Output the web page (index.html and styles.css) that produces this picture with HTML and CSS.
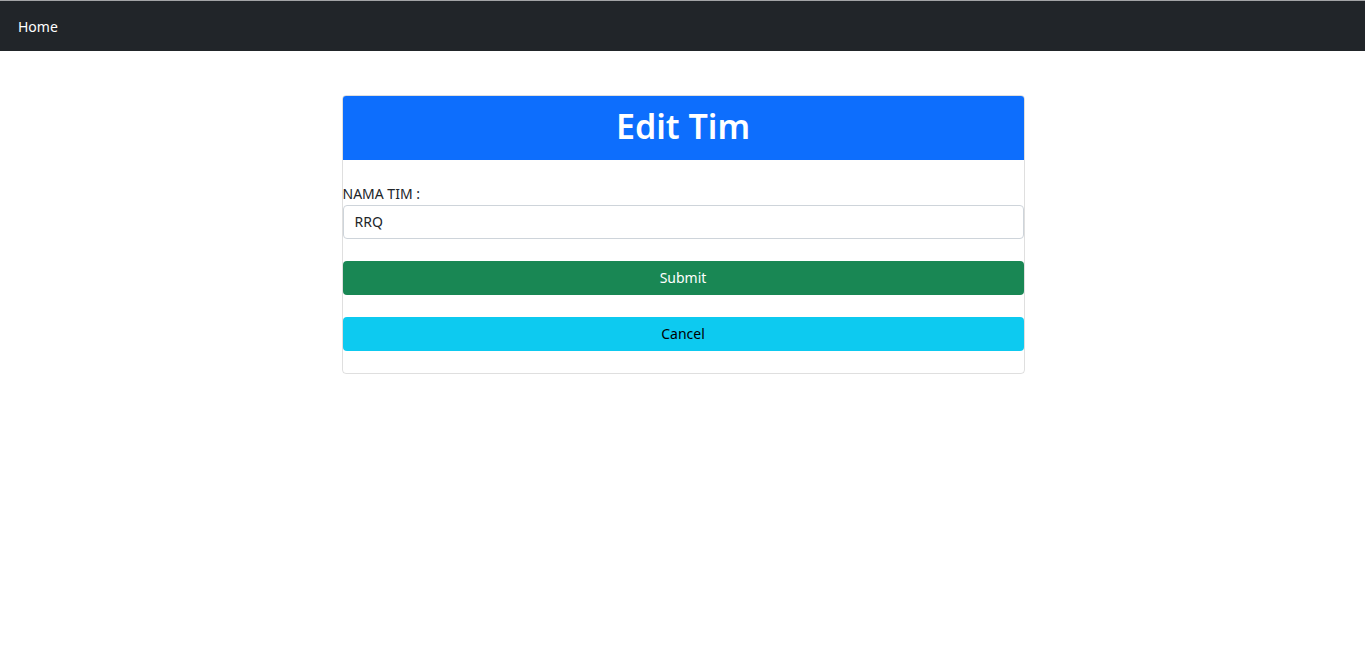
FILE: index.html
```html
<!DOCTYPE html>
<html lang="id">
<head>
<meta charset="utf-8">
<title>Edit Tim</title>
<link rel="stylesheet" href="styles.css">
</head>
<body>
<nav class="navbar">
  <a class="nav-link" href="#">Home</a>
</nav>
<main class="page">
  <div class="card">
    <div class="card-header">
      <h2 class="card-title">Edit Tim</h2>
    </div>
    <form class="card-body">
      <label class="form-label" for="nama">NAMA TIM :</label>
      <input class="form-control" id="nama" type="text" value="RRQ">
      <button class="btn btn-success" type="button">Submit</button>
      <button class="btn btn-info" type="button">Cancel</button>
    </form>
  </div>
</main>
</body>
</html>
```

FILE: styles.css
```css
* { box-sizing: border-box; }

body {
  margin: 0;
  font-family: "Noto Sans", "Open Sans", sans-serif;
  font-size: 14px;
  color: #212529;
  background: #fff;
}

.navbar {
  height: 51px;
  border-top: 1px solid #a3a4a6;
  background: #212529;
  display: flex;
  align-items: center;
  padding-left: 18px;
}

.nav-link {
  color: #fff;
  text-decoration: none;
  font-size: 14px;
  line-height: 21px;
}

.page {
  padding-top: 44px;
  display: flex;
  justify-content: center;
}

.card {
  width: 683px;
  margin-left: 1px;
  border: 1px solid rgba(0, 0, 0, 0.125);
  border-radius: 4px;
  overflow: hidden;
}

.card-header {
  height: 64px;
  background: #0d6efd;
  display: flex;
  align-items: center;
  justify-content: center;
  padding-bottom: 4px;
}

.card-title {
  margin: 0;
  color: #fff;
  font-size: 34px;
  font-weight: 600;
  line-height: 40px;
}

.card-body {
  display: flex;
  flex-direction: column;
  padding: 23px 0 22px;
  margin: 0;
}

.form-label {
  line-height: 22px;
  font-size: 14px;
}

.form-control {
  height: 34px;
  border: 1px solid #ced4da;
  border-radius: 4px;
  padding: 0 11px 1px;
  font-family: inherit;
  font-size: 14px;
  color: #212529;
  margin-bottom: 22px;
}

.btn {
  height: 34px;
  border: 0;
  border-radius: 4px;
  padding: 0 0 1px;
  font-family: inherit;
  font-size: 14px;
  cursor: pointer;
}

.btn-success {
  background: #198754;
  color: #fff;
  margin-bottom: 22px;
}

.btn-info {
  background: #0dcaf0;
  color: #000;
}
```
